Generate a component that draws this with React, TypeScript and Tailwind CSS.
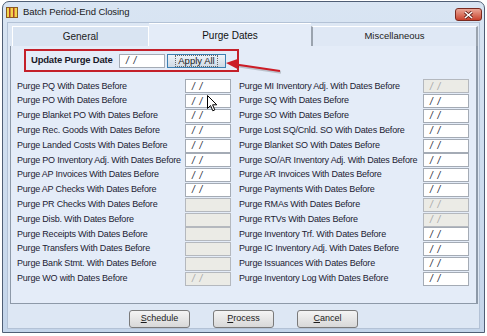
import React from 'react';

type State = 'e' | 'x' | 'd';

const leftRows: [string, State][] = [
  ['Purge PQ With Dates Before', 'e'],
  ['Purge PO With Dates Before', 'e'],
  ['Purge Blanket PO With Dates Before', 'e'],
  ['Purge Rec. Goods With Dates Before', 'e'],
  ['Purge Landed Costs With Dates Before', 'e'],
  ['Purge PO Inventory Adj. With Dates Before', 'e'],
  ['Purge AP Invoices With Dates Before', 'e'],
  ['Purge AP Checks With Dates Before', 'e'],
  ['Purge PR Checks With Dates Before', 'x'],
  ['Purge Disb. With Dates Before', 'x'],
  ['Purge Receipts With Dates Before', 'x'],
  ['Purge Transfers With Dates Before', 'x'],
  ['Purge Bank Stmt. With Dates Before', 'x'],
  ['Purge WO with Dates Before', 'd'],
];

const rightRows: [string, State][] = [
  ['Purge MI Inventory Adj. With Dates Before', 'd'],
  ['Purge SQ With Dates Before', 'e'],
  ['Purge SO With Dates Before', 'e'],
  ['Purge Lost SQ/Cnld. SO With Dates Before', 'e'],
  ['Purge Blanket SO With Dates Before', 'e'],
  ['Purge SO/AR Inventory Adj. With Dates Before', 'e'],
  ['Purge AR Invoices With Dates Before', 'e'],
  ['Purge Payments With Dates Before', 'e'],
  ['Purge RMAs With Dates Before', 'd'],
  ['Purge RTVs With Dates Before', 'd'],
  ['Purge Inventory Trf. With Dates Before', 'e'],
  ['Purge IC Inventory Adj. With Dates Before', 'e'],
  ['Purge Issuances With Dates Before', 'e'],
  ['Purge Inventory Log With Dates Before', 'e'],
];

function DateBox({ state }: { state: State }) {
  const enabled = state === 'e';
  return (
    <div
      className={`h-[14px] w-[46px] shrink-0 border flex items-center pl-[6px] text-[10px] ${
        enabled ? 'bg-white border-[#a4abb5] text-[#2a2a3a]' : 'bg-[#ebebe6] border-[#b4b8be] text-[#a8a8a8]'
      }`}
    >
      {state !== 'x' && <span className="italic tracking-[1px]">/ /</span>}
    </div>
  );
}

function Column({ rows, labelW }: { rows: [string, State][]; labelW: string }) {
  return (
    <div className="flex flex-col">
      {rows.map(([label, st]) => (
        <div key={label} className="h-[14.8px] flex items-center">
          <div className={`${labelW} shrink-0 whitespace-nowrap text-[9px] tracking-[-0.2px] text-[#1c2233]`}>{label}</div>
          <DateBox state={st} />
        </div>
      ))}
    </div>
  );
}

function WinButton({ label, u }: { label: string; u: string }) {
  return (
    <button className="w-[61px] h-[18px] rounded-[3px] border border-[#7a7a7a] bg-gradient-to-b from-[#f4f4f4] to-[#d8d8d8] text-[9px] text-[#1c1c1c] flex items-center justify-center">
      <span>
        <span className="underline">{u}</span>
        {label}
      </span>
    </button>
  );
}

export default function App() {
  return (
    <div className="relative w-[487px] h-[336px] bg-white overflow-hidden font-['Liberation_Sans',Arial,sans-serif]">
      <div className="ml-[2px] mt-[1px] w-[483px] h-[332px] border border-[#4f5e75] rounded-t-[7px] bg-gradient-to-b from-[#d9e5f3] to-[#c4d5ea] flex flex-col">
        {/* title bar */}
        <div className="h-[21px] flex items-center pl-[3px] pr-[2px]">
          <svg width="12" height="11" viewBox="0 0 12 11" className="mt-[1px]">
            <rect x="0.5" y="0.5" width="11" height="10" fill="#f3d54a" stroke="#8a5a20" />
            <rect x="3" y="1" width="1.5" height="9" fill="#b0402a" />
            <rect x="7" y="1" width="1.5" height="9" fill="#b0402a" />
          </svg>
          <span className="ml-[5px] text-[9.5px] tracking-[-0.1px] text-[#1a1a1a] mt-[1px]">Batch Period-End Closing</span>
          <div className="ml-auto mt-[5px] w-[27px] h-[13px] rounded-[3px] border border-[#7a2a20] bg-gradient-to-b from-[#e9a596] to-[#c8402c] flex items-center justify-center">
            <svg width="9" height="8" viewBox="0 0 9 8">
              <path d="M1 1 L8 7 M8 1 L1 7" stroke="#5a1a14" strokeWidth="3" />
              <path d="M1 1 L8 7 M8 1 L1 7" stroke="#ffffff" strokeWidth="1.6" />
            </svg>
          </div>
        </div>
        {/* client */}
        <div className="mx-[4px] mb-[3px] flex-1 bg-[#dde7f4] border border-[#b3c2d6] flex flex-col">
          <div className="ml-[2px] w-[468px]">
            {/* tabs */}
            <div className="flex items-end h-[23px]">
              <div className="ml-[2px] w-[137px] h-[20px] border border-white border-b-0 bg-[#d9e4f2] flex items-center justify-center text-[10px] text-[#222]">
                General
              </div>
              <div className="w-[162px] h-[23px] bg-[#e4ecf8] border-t border-white flex items-center justify-center text-[10px] text-[#111]">
                Purge Dates
              </div>
              <div className="w-[167px] h-[20px] border-l-2 border-r-2 border-t border-l-[#9aa3ae] border-r-[#9aa3ae] border-t-white bg-[#dfe8f5] flex items-center justify-center text-[9.5px] text-[#222]">
                Miscellaneous
              </div>
            </div>
            {/* panel */}
            <div className="h-[258px] border border-t-0 border-[#8d99a8] border-r-2 bg-[#e4ecf8] flex flex-col">
              <div className="ml-[13px] mt-[3px] w-[215px] h-[23px] border-2 border-[#c4202a] flex items-center pl-[5px]">
                <span className="font-bold whitespace-nowrap text-[9.5px] tracking-[-0.2px] text-[#1a1a2a] w-[88px]">Update Purge Date</span>
                <div className="h-[14px] w-[46px] bg-white border border-[#a4abb5] flex items-center pl-[6px] text-[10px] text-[#2a2a3a]">
                  <span className="italic tracking-[1px]">/ /</span>
                </div>
                <div className="ml-[2px] w-[59px] h-[14px] border border-[#3c7fb1] bg-gradient-to-b from-[#eef4fa] to-[#cfd9e4] flex items-center justify-center text-[9.5px] text-[#1a1a1a]">
                  <span className="px-[2px] border border-dotted border-[#666] leading-[10px]">Apply All</span>
                </div>
              </div>
              <div className="mt-[7px] pl-[6px] flex">
                <Column rows={leftRows} labelW="w-[168px]" />
                <div className="ml-[8px]">
                  <Column rows={rightRows} labelW="w-[184px]" />
                </div>
              </div>
            </div>
          </div>
          {/* buttons */}
          <div className="mt-[6px] flex justify-center gap-[23px]">
            <WinButton u="S" label="chedule" />
            <WinButton u="P" label="rocess" />
            <WinButton u="C" label="ancel" />
          </div>
        </div>
      </div>

      {/* annotation arrow */}
      <svg className="absolute left-0 top-0 pointer-events-none" width="487" height="336">
        <line x1="281" y1="72.5" x2="237" y2="66" stroke="#000" strokeOpacity="0.18" strokeWidth="2.5" />
        <line x1="280" y1="71" x2="236" y2="64.5" stroke="#cc1c26" strokeWidth="2.2" />
        <polygon points="226,63 239,58.5 237.5,69" fill="#cc1c26" />
      </svg>

      {/* mouse cursor */}
      <svg className="absolute left-[207px] top-[95px] pointer-events-none" width="12" height="18" viewBox="0 0 12 18">
        <path d="M0.5 0.5 L0.5 13.5 L3.5 10.5 L5.8 15.8 L7.8 14.9 L5.6 9.8 L9.8 9.8 Z" fill="#fff" stroke="#000" strokeWidth="1" strokeLinejoin="round" />
      </svg>
    </div>
  );
}
